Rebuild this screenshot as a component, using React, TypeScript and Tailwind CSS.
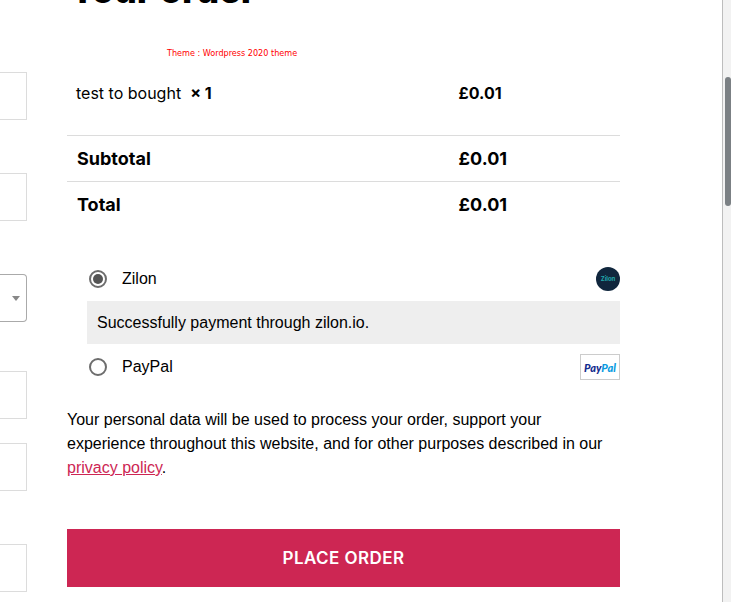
import { useState } from "react";

type Row = { label: string; amount: string };

const totals: Row[] = [
  { label: "Subtotal", amount: "£0.01" },
  { label: "Total", amount: "£0.01" },
];

const field =
  "block h-12 w-full border border-l-0 border-[#dcdcdc] bg-white outline-none";
const radio =
  "m-0 grid size-[18px] shrink-0 appearance-none place-content-center rounded-full border-2 border-[#6d6d6d] bg-white before:size-2.5 before:rounded-full checked:before:bg-[#555555]";

function BillingFields() {
  return (
    <form className="flex w-[27px] shrink-0 flex-col pt-[72px]">
      <input aria-label="First name" className={field} />
      <input aria-label="Company" className={`${field} mt-[53px]`} />
      <div className="relative mt-[53px]">
        <select
          aria-label="Country"
          className="block h-12 w-full appearance-none rounded-r border border-l-0 border-[#aaaaaa] bg-white outline-none"
        />
        <svg
          viewBox="0 0 8 5"
          className="pointer-events-none absolute right-[7px] top-[22px] h-[5px] w-2 fill-[#888888]"
        >
          <path d="M0 0h8L4 5z" />
        </svg>
      </div>
      <input aria-label="Street address" className={`${field} mt-[49px]`} />
      <input aria-label="Apartment" className={`${field} mt-6`} />
      <input aria-label="Town" className={`${field} mt-[53px]`} />
    </form>
  );
}

function ZilonLogo() {
  return (
    <span className="grid size-6 place-content-center rounded-full bg-[#10263d] font-[Inter,sans-serif] text-[6px] font-bold leading-none text-[#22a9ac]">
      Zilon
    </span>
  );
}

function PayPalLogo() {
  return (
    <span className="grid h-[26px] w-10 place-content-center border border-[#cccccc] bg-white font-[Lato,sans-serif] text-[11px] font-black italic leading-none text-[#142c8e]">
      <span>
        Pay<span className="text-[#0a9be1]">Pal</span>
      </span>
    </span>
  );
}

function OrderSummary() {
  return (
    <table className="w-full table-fixed border-collapse text-left font-[Inter,sans-serif]">
      <colgroup>
        <col className="w-[69%]" />
        <col />
      </colgroup>
      <tbody>
        <tr className="h-[66px] align-top text-base">
          <td className="px-[9px] pt-3">
            test to bought&nbsp; <strong>× 1</strong>
          </td>
          <td className="px-2.5 pt-3 font-bold">£0.01</td>
        </tr>
        {totals.map((row) => (
          <tr key={row.label} className="h-[46px] border-t border-[#dcdcdc] text-lg">
            <th className="px-2.5 pt-0.5 font-bold">{row.label}</th>
            <td className="px-2.5 pt-0.5 font-bold">{row.amount}</td>
          </tr>
        ))}
      </tbody>
    </table>
  );
}

function PaymentMethods() {
  const [method, setMethod] = useState("zilon");
  return (
    <div className="mt-[34px] pl-5">
      <div className="flex h-9 items-center justify-between">
        <label className="flex items-center gap-[15px] pl-0.5">
          <input
            type="radio"
            name="payment"
            className={radio}
            checked={method === "zilon"}
            onChange={() => setMethod("zilon")}
          />
          Zilon
        </label>
        <ZilonLogo />
      </div>
      <p className="mt-1 flex h-[43px] items-center bg-[#eeeeee] px-2.5">
        Successfully payment through zilon.io.
      </p>
      <div className="mt-1 flex h-[38px] items-center justify-between">
        <label className="flex items-center gap-[15px] pl-0.5">
          <input
            type="radio"
            name="payment"
            className={radio}
            checked={method === "paypal"}
            onChange={() => setMethod("paypal")}
          />
          PayPal
        </label>
        <PayPalLogo />
      </div>
    </div>
  );
}

export default function App() {
  return (
    <div className="flex h-screen overflow-hidden bg-white font-['Liberation_Sans',Arial,sans-serif] text-base text-black">
      <BillingFields />
      <main className="ml-10 mr-[102px] min-w-0 flex-1">
        <h2 className="-mt-[30px] pl-0.5 font-[Inter,sans-serif] text-4xl font-extrabold">
          Your order
        </h2>
        <p className="mb-2.5 mt-[37px] pl-[100px] font-['DejaVu_Sans_Condensed','DejaVu_Sans',sans-serif] text-[9px] leading-3 text-[#ff0000]">
          Theme : Wordpress 2020 theme
        </p>
        <OrderSummary />
        <PaymentMethods />
        <p className="mt-[22px] leading-6">
          Your personal data will be used to process your order, support your
          experience throughout this website, and for other purposes described
          in our{" "}
          <a href="#privacy" className="text-[#cd2653] underline">
            privacy policy
          </a>
          .
        </p>
        <button
          type="button"
          className="mt-[49px] block h-[58px] w-full bg-[#cd2653] pt-0.5 font-[Inter,sans-serif] text-[17px] font-semibold uppercase tracking-wide text-white"
        >
          Place order
        </button>
      </main>
      <div className="w-[9px] shrink-0 border-l border-[#bdbdbd] bg-[#f2f2f2] pl-0.5 pt-[77px]">
        <div className="h-[129px] rounded-[3px] bg-[#7b8084]" />
      </div>
    </div>
  );
}
